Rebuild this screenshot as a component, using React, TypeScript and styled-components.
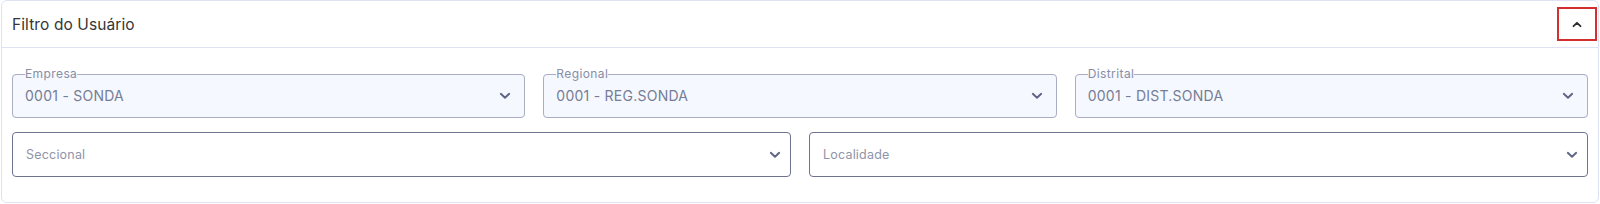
import React from "react";
import styled, { createGlobalStyle } from "styled-components";

const GlobalStyle = createGlobalStyle`
  html, body {
    margin: 0;
    padding: 0;
    background: #ffffff;
    font-family: Inter, "Noto Sans", "Liberation Sans", sans-serif;
  }
  * { box-sizing: border-box; }
`;

const Page = styled.div`
  padding: 0 1px 0 1px;
`;

const Card = styled.section`
  border: 1px solid #dfe2f2;
  border-radius: 6px;
  background: #ffffff;
`;

const Header = styled.header`
  height: 47px;
  display: flex;
  align-items: center;
  justify-content: space-between;
  padding: 0 0 0 10px;
  border-bottom: 1px solid #dfe2f2;
`;

const Title = styled.h2`
  margin: 0;
  font-size: 15.5px;
  font-weight: 400;
  color: #363636;
  letter-spacing: 0.1px;
`;

const ToggleButton = styled.button`
  width: 40px;
  height: 34px;
  margin-right: 1px;
  display: flex;
  align-items: center;
  justify-content: center;
  background: #ffffff;
  border: 2px solid #d32f2f;
  border-radius: 0;
  padding: 0;
  cursor: pointer;
`;

const Body = styled.div`
  padding: 20px 10px 25px 10px;
  display: flex;
  flex-direction: column;
  gap: 14px;
`;

const Row = styled.div<{ $cols: number }>`
  display: grid;
  grid-template-columns: repeat(${(p) => p.$cols}, minmax(0, 1fr));
  column-gap: 18px;
`;

const FilledField = styled.fieldset`
  margin: 0;
  padding: 0 13px 6px 12px;
  min-width: 0;
  border: 1px solid #a9aec4;
  border-radius: 4px;
  background: #f5f8fe;
`;

const Legend = styled.legend`
  padding: 0;
  margin: 0;
  font-size: 12px;
  line-height: 12px;
  color: #878ea6;
  letter-spacing: 0.4px;
`;

const FieldContent = styled.div`
  height: 31px;
  display: flex;
  align-items: center;
  justify-content: space-between;
`;

const Value = styled.span`
  font-size: 14px;
  color: #767d96;
  letter-spacing: 0.25px;
`;

const EmptyField = styled.div`
  height: 45px;
  padding: 0 9px 0 13px;
  border: 1px solid #6e7390;
  border-radius: 4px;
  background: #ffffff;
  display: flex;
  align-items: center;
  justify-content: space-between;
`;

const Placeholder = styled.span`
  font-size: 12.5px;
  color: #8f94a9;
  letter-spacing: 0.2px;
`;

const ChevronDown = ({ color = "#5f6584" }: { color?: string }) => (
  <svg width="12" height="8" viewBox="0 0 12 8" aria-hidden="true">
    <path
      d="M1.8 1.8 L6 5.8 L10.2 1.8"
      fill="none"
      stroke={color}
      strokeWidth="1.9"
      strokeLinecap="round"
      strokeLinejoin="round"
    />
  </svg>
);

const ChevronUp = () => (
  <svg width="10" height="7" viewBox="0 0 10 7" aria-hidden="true">
    <path
      d="M1.5 5.2 L5 1.8 L8.5 5.2"
      fill="none"
      stroke="#2b2b2b"
      strokeWidth="1.8"
      strokeLinecap="round"
      strokeLinejoin="round"
    />
  </svg>
);

const filled = [
  { label: "Empresa", value: "0001 - SONDA" },
  { label: "Regional", value: "0001 - REG.SONDA" },
  { label: "Distrital", value: "0001 - DIST.SONDA" },
];

const empty = ["Seccional", "Localidade"];

export default function App() {
  return (
    <>
      <GlobalStyle />
      <Page>
        <Card>
          <Header>
            <Title>Filtro do Usuário</Title>
            <ToggleButton aria-label="Recolher">
              <ChevronUp />
            </ToggleButton>
          </Header>
          <Body>
            <Row $cols={3}>
              {filled.map((f) => (
                <FilledField key={f.label}>
                  <Legend>{f.label}</Legend>
                  <FieldContent>
                    <Value>{f.value}</Value>
                    <ChevronDown />
                  </FieldContent>
                </FilledField>
              ))}
            </Row>
            <Row $cols={2}>
              {empty.map((p) => (
                <EmptyField key={p}>
                  <Placeholder>{p}</Placeholder>
                  <ChevronDown />
                </EmptyField>
              ))}
            </Row>
          </Body>
        </Card>
      </Page>
    </>
  );
}
